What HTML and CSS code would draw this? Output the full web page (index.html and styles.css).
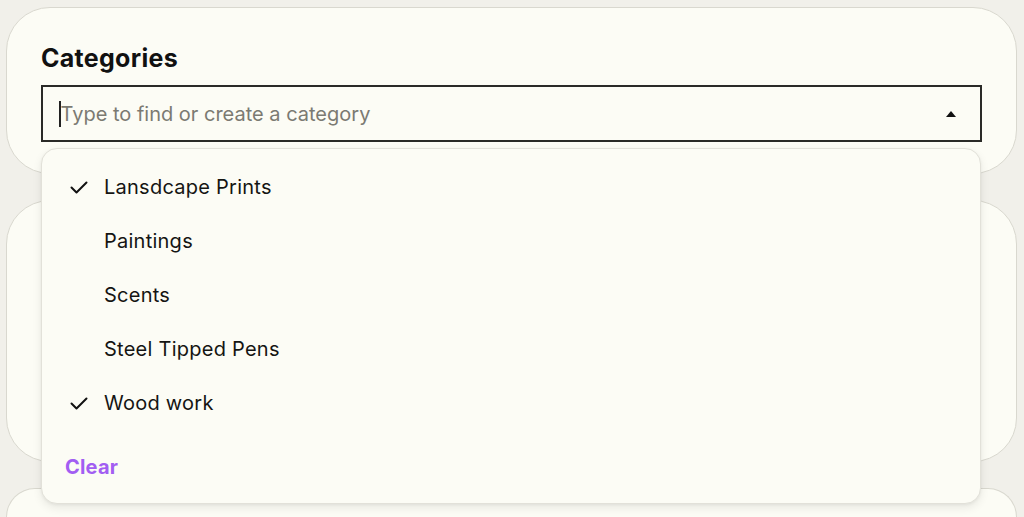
FILE: index.html
```html
<!DOCTYPE html>
<html lang="en">
<head>
<meta charset="utf-8">
<title>Categories</title>
<link rel="stylesheet" href="styles.css">
</head>
<body>
<div class="page">
  <section class="card card-main">
    <h2 class="title">Categories</h2>
    <div class="combo">
      <div class="field">
        <span class="caret"></span>
        <span class="placeholder">Type to find or create a category</span>
        <svg class="arrow" width="10" height="6" viewBox="0 0 10 6"><path d="M0 6 L5 0 L10 6 Z" fill="#111"/></svg>
      </div>
      <div class="menu">
        <ul class="options">
          <li class="option selected">
            <svg class="check" width="18" height="13" viewBox="0 0 18 13"><path d="M1.5 6.5 L6.5 11.5 L16.5 1.5" fill="none" stroke="#111" stroke-width="2" stroke-linecap="round" stroke-linejoin="round"/></svg>
            <span>Lansdcape Prints</span>
          </li>
          <li class="option"><span>Paintings</span></li>
          <li class="option"><span>Scents</span></li>
          <li class="option"><span>Steel Tipped Pens</span></li>
          <li class="option selected">
            <svg class="check" width="18" height="13" viewBox="0 0 18 13"><path d="M1.5 6.5 L6.5 11.5 L16.5 1.5" fill="none" stroke="#111" stroke-width="2" stroke-linecap="round" stroke-linejoin="round"/></svg>
            <span>Wood work</span>
          </li>
        </ul>
        <div class="clear">Clear</div>
      </div>
    </div>
  </section>
  <section class="card card-second"></section>
  <section class="card card-third"></section>
</div>
</body>
</html>
```

FILE: styles.css
```css
* { box-sizing: border-box; }
html, body {
  margin: 0;
  padding: 0;
  background: #f1f0ea;
  font-family: Inter, "Noto Sans", "Liberation Sans", sans-serif;
  color: #111;
  overflow: hidden;
  height: 517px;
}
.page {
  padding: 7px 7px 0 6px;
  display: flex;
  flex-direction: column;
  gap: 26px;
}
.card {
  background: #fcfcf5;
  border: 1px solid #d9d8cf;
  border-radius: 44px;
}
.card-main {
  height: 167px;
  padding: 35px 34px 0 34px;
  position: relative;
  z-index: 2;
}
.card-second { height: 262px; }
.card-third {
  height: 29px;
  border-bottom: none;
  border-bottom-left-radius: 0;
  border-bottom-right-radius: 0;
}
.title {
  margin: 0 0 12px 0;
  font-size: 25px;
  line-height: 30px;
  font-weight: 700;
  letter-spacing: 0.3px;
}
.combo { position: relative; }
.field {
  height: 57px;
  border: 2px solid #2a2a27;
  background: #fcfcf5;
  display: flex;
  align-items: center;
  padding: 0 24px 0 16px;
}
.caret {
  width: 1.5px;
  height: 26px;
  background: #222;
}
.placeholder {
  flex: 1;
  font-size: 20px;
  color: #7b7a72;
}
.arrow { display: block; margin-top: 1px; }
.menu {
  position: absolute;
  top: 63px;
  left: 0;
  width: 940px;
  height: 356px;
  background: #fcfcf5;
  border: 1px solid #e2e1d9;
  border-radius: 16px;
  box-shadow: 0 4px 10px rgba(0, 0, 0, 0.08), 0 1px 3px rgba(0, 0, 0, 0.05);
  padding: 11px 0 0 0;
}
.options { list-style: none; margin: 0; padding: 0; }
.option {
  height: 54px;
  display: flex;
  align-items: center;
  padding-left: 62px;
  position: relative;
  font-size: 20px;
  letter-spacing: 0.25px;
  color: #151513;
}
.check {
  position: absolute;
  left: 28px;
  top: 21px;
}
.clear {
  margin-top: 10px;
  height: 54px;
  display: flex;
  align-items: center;
  padding-left: 23px;
  font-size: 20px;
  font-weight: 700;
  letter-spacing: 0.2px;
  color: #a25ef2;
}
```
